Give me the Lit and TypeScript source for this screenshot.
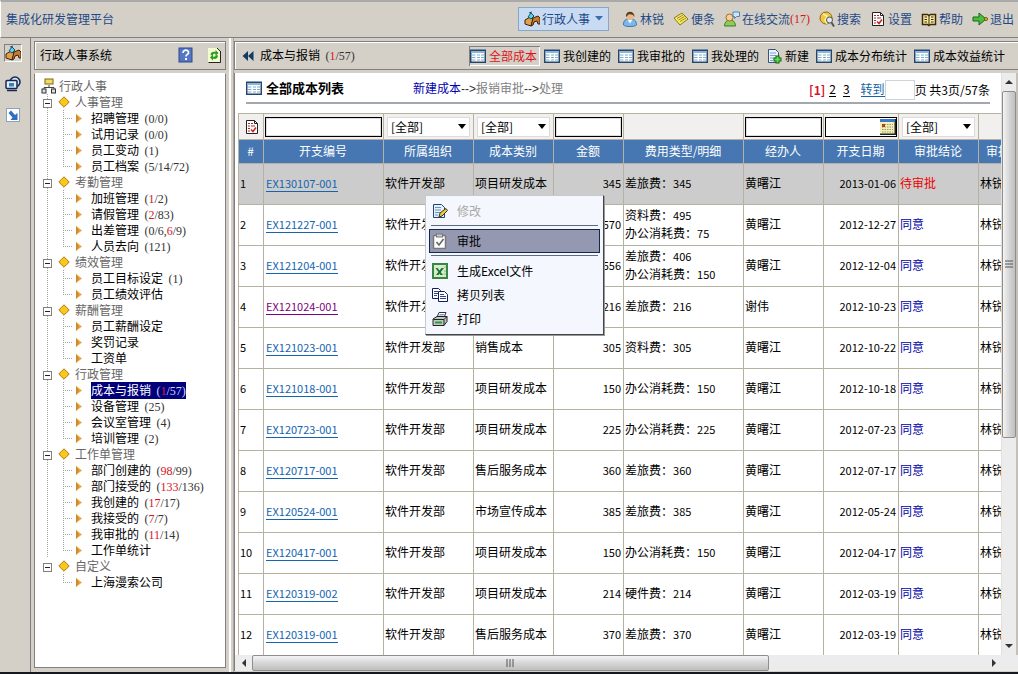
import { LitElement, html, css, svg, nothing, TemplateResult } from "lit";
import { customElement, state } from "lit/decorators.js";
import { classMap } from "lit/directives/class-map.js";
import { styleMap } from "lit/directives/style-map.js";

const shapes: Record<string, TemplateResult> = {
  desk: svg`<path d="M1 9l5-3 3 1v2l-2 6-6-2z" fill="#e0a050" stroke="#3a2408"/><path d="M9 7l5-2 2 2v6h-2l-1-3-3 1-1 3-2 1z" fill="#c87a30" stroke="#3a2408"/><path d="M4 6l3-4 3 3-3 3z" fill="#5fd0e8" stroke="#17506a"/><path d="M5 2l3-1" stroke="#17506a"/>`,
  monitors: svg`<circle cx="10" cy="6" r="5" fill="#cfe0f4" stroke="#16284e" stroke-width="1.5"/><rect x="1" y="4.500" width="11" height="8" rx="1" fill="#e9eef8" stroke="#16284e" stroke-width="1.500"/><rect x="4" y="7" width="5" height="3.500" fill="#2a86c8"/><path d="M2 14.500h10" stroke="#16284e" stroke-width="1.500"/>`,
  shortcut: svg`<rect x="1.500" y="1.500" width="13" height="13" fill="#fff" stroke="#8fa0b8"/><path d="M3.500 6L6 3.500l4 4.500 2.500-2v7h-7l2-2.500z" fill="#2f6fc0"/>`,
  person: svg`<path d="M1.500 14c0-6 3-6 6.500-6s6.500 1 6.500 6c-2 2-11 2-13 0z" fill="#7db8ea" stroke="#3c78b4"/><path d="M5.500 8.500l2.500 4 2.500-4z" fill="#fff"/><circle cx="8" cy="5" r="4" fill="#e9b98a"/><path d="M4 6c-1-7 9-7 8.500 0-1-2.500-4-3-6-2.500z" fill="#5a3c20"/>`,
  note: svg`<path d="M1 7l8-5 6 6-8 6z" fill="#f6e96a" stroke="#8c7a14"/><path d="M4 7.500l6-3.500M5.500 9l6-3.500M7 10.500l6-3.500" stroke="#a08c20"/>`,
  chat: svg`<path d="M.5 15c0-8 11-8 11 0z" fill="#8ccc58" stroke="#3c7c1c"/><circle cx="5.500" cy="6.500" r="3.500" fill="#f4cf9c" stroke="#a86c28"/><path d="M9 1h6.500v4.500h-3l-2 2v-2h-1.500z" fill="#cfe6fa" stroke="#4a86bc"/>`,
  search: svg`<circle cx="7" cy="7" r="6" fill="#f0c840" stroke="#906a10"/><path d="M4 3l4 2-2 4 2 4" stroke="#fff2a8" stroke-width="1.500" fill="none"/><circle cx="10.500" cy="9" r="3" fill="#dcebf8" stroke="#555"/><path d="M12.500 11.500l2.500 4" stroke="#555" stroke-width="2"/>`,
  report: svg`<path d="M2.500 1.500h8l3 3v10h-11z" fill="#fff" stroke="#222"/><path d="M10.500 1.500v3h3" fill="none" stroke="#222"/><path d="M4 4.500h2m1 0h2M4 7h2m1 0h4M4 9.500h2M4 12h2" stroke="#b02828"/><path d="M7 10.500l2 2 3-4" fill="none" stroke="#d02020" stroke-width="1.500"/>`,
  book: svg`<path d="M1.500 3.500h5l1.500 1 1.500-1h5v10h-5l-1.500 1-1.500-1h-5z" fill="#f6eaa0" stroke="#3a2a08" stroke-width="1.500"/><path d="M8 4v10M3.500 6h2.500M3.500 8.500h2.500M3.500 11h2.500M10 6h2.500M10 8.500h2.500M10 11h2.500" stroke="#3a2a08"/>`,
  exit: svg`<path d="M1 6h6V2l7 6-7 6V10H1z" fill="#46c03c" stroke="#1c6414"/><circle cx="14" cy="8" r="1.500" fill="#e8d020" stroke="#6a5a08"/>`,
  grid: svg`<rect x=".75" y="2.250" width="14.500" height="12" fill="#fff" stroke="#24466e" stroke-width="1.500"/><rect x="1.500" y="3" width="13" height="2" fill="#8cb4dc"/><path d="M2 7h3.500M7 7h3M11 7h3M2 9.500h3.500M7 9.500h3M11 9.500h3M2 12h3.500M7 12h3M11 12h3" stroke="#7fadc8"/>`,
  create: svg`<path d="M2.500 1.500h7l3 3v10h-10z" fill="#eef4fc" stroke="#35537e"/><path d="M4 5h6M4 7.500h6M4 10h4M4 12.500h3" stroke="#7fa4cc"/><path d="M11.500 7.500v8M7.500 11.500h8" stroke="#126010" stroke-width="4"/><path d="M11.500 8.500v6M8.500 11.500h6" stroke="#5fe04c" stroke-width="2"/>`,
  help: svg`<rect x="1" y="1" width="13" height="14" fill="#5476c4" stroke="#2c4890"/><path d="M5 6c0-4 6-3.500 5.500 0-.500 1.500-2.500 1.500-2.500 3.500" fill="none" stroke="#fff" stroke-width="1.700"/><rect x="7" y="11" width="2" height="2" fill="#fff"/>`,
  refresh: svg`<path d="M2 1h9l3 3v11h-12z" fill="#f4fbd0"/><path d="M14.500 4v11.500h-12M11 1l3 3" stroke="#222" fill="none"/><path d="M4.500 8c0-3 3-4 5-3V3l3 3-3 3V7c-1-.500-3 0-3 1.500zM12 8.500c0 3-3 4-5 3v2l-3-3 3-3v2c1 .500 3 0 3-1.500z" fill="#2c9c28"/>`,
  org: svg`<path d="M8 7v3M3 12V9.500h10V12" fill="none" stroke="#444"/><rect x="4" y="1" width="8" height="5" fill="#f4dc60" stroke="#7a6414"/><rect x="1" y="11" width="4" height="4" fill="#ddd" stroke="#333"/><rect x="10.500" y="11" width="4" height="4" fill="#ddd" stroke="#333"/>`,
  edit: svg`<path d="M1.500 1.500h8l3 3v10h-11z" fill="#e6f0fb" stroke="#24466e"/><path d="M3 4.500h6M3 7h6M3 9.500h5M3 12h3" stroke="#6a94c0"/><path d="M7 14l1-4 6-4.500 1.500 2-5.500 5.500z" fill="#f0cc30" stroke="#333"/>`,
  approve: svg`<rect x="1.500" y="2.500" width="12" height="13" rx="1" fill="#fff" stroke="#777" stroke-width="1.500"/><rect x="4.500" y="1" width="6" height="3" fill="#ccc" stroke="#777"/><path d="M4.500 9l2.500 3 4.500-6" fill="none" stroke="#666" stroke-width="1.600"/>`,
  excel: svg`<rect x="1" y="1" width="14" height="14" fill="#d4eccc" stroke="#3c8444" stroke-width="2"/><path d="M3.500 5h2l5.500 7h-2.500zM9.500 5h2.500l-5.500 7h-2.500z" fill="#1c7430"/><path d="M12 8h2M11.500 11h2.500M12 4h2" stroke="#7cc080"/>`,
  copy: svg`<path d="M.5 1.500h6l2 2v8h-8z" fill="#fff" stroke="#141c54"/><path d="M2 4.500h4M2 6.500h4M2 8.500h3" stroke="#2c4494"/><path d="M6.500 4.500h6l3 3v7h-9z" fill="#fff" stroke="#141c54"/><path d="M8 7.500h4M8 9.500h6M8 11.500h6" stroke="#2c4494"/>`,
  print: svg`<path d="M5 6l2-4.500h7l-2 5z" fill="#fff" stroke="#334"/><path d="M7.500 3.500h5M6.500 5h5" stroke="#78a0c8"/><path d="M1 8l4-2.500h10v5l-3 4h-11z" fill="#c0c8c8" stroke="#222"/><path d="M1.500 8.500h10.500l3-3M12 8.500v6" stroke="#222" fill="none"/><path d="M3 11.500h7" stroke="#2c9c30" stroke-width="2"/>`,
  calendar: svg`<rect x="0" y="0" width="16" height="16" fill="#222"/><rect x="0" y="0" width="14.500" height="14.500" fill="#f2efb8"/><rect x="0" y="0" width="15" height="3" fill="#3c78c8"/><path d="M2 5.500h11M2 8h11M2 10.500h11M2 13h11" stroke="#9a9a60" stroke-dasharray="1.500 1"/><rect x="2" y="5" width="3" height="3" fill="#b04020"/>`,
  rewind: svg`<path d="M8 3v10L2.500 8zM13.500 3v10L8 8z" fill="#123c64"/>`,
};
const icon = (name: string) =>
  html`<svg class="ic" viewBox="0 0 16 16" aria-hidden="true">${shapes[name]}</svg>`;

// The unread part of a count is wrapped in asterisks.
const count = (text: string) =>
  html`<span class="count">${text.split("*").map((part, i) => (i % 2 ? html`<b>${part}</b>` : part))}</span>`;

const tree: { name: string; items: [string, string?][] }[] = [
  { name: "人事管理", items: [["招聘管理", "(0/0)"], ["试用记录", "(0/0)"], ["员工变动", "(1)"], ["员工档案", "(5/14/72)"]] },
  { name: "考勤管理", items: [["加班管理", "(*1*/2)"], ["请假管理", "(*2*/83)"], ["出差管理", "(0/6,*6*/9)"], ["人员去向", "(121)"]] },
  { name: "绩效管理", items: [["员工目标设定", "(1)"], ["员工绩效评估"]] },
  { name: "薪酬管理", items: [["员工薪酬设定"], ["奖罚记录"], ["工资单"]] },
  { name: "行政管理", items: [["成本与报销", "(*1*/57)"], ["设备管理", "(25)"], ["会议室管理", "(4)"], ["培训管理", "(2)"]] },
  { name: "工作单管理", items: [["部门创建的", "(*98*/99)"], ["部门接受的", "(*133*/136)"], ["我创建的", "(*17*/17)"], ["我接受的", "(*7*/7)"], ["我审批的", "(*11*/14)"], ["工作单统计"]] },
  { name: "自定义", items: [["上海漫索公司"]] },
];

type Row = { id: string; kind: string; amount: number; fees: [string, number][]; by: string; date: string; result: string };
const row = (id: string, kind: string, amount: number, fees: [string, number][], date: string, by = "黄曙江", result = "同意"): Row =>
  ({ id, kind, amount, fees, by, date, result });
const rows: Row[] = [
  row("EX130107-001", "项目研发成本", 345, [["差旅费", 345]], "2013-01-06", "黄曙江", "待审批"),
  row("EX121227-001", "项目研发成本", 570, [["资料费", 495], ["办公消耗费", 75]], "2012-12-27"),
  row("EX121204-001", "项目研发成本", 556, [["差旅费", 406], ["办公消耗费", 150]], "2012-12-04"),
  row("EX121024-001", "项目研发成本", 216, [["差旅费", 216]], "2012-10-23", "谢伟"),
  row("EX121023-001", "销售成本", 305, [["资料费", 305]], "2012-10-22"),
  row("EX121018-001", "项目研发成本", 150, [["办公消耗费", 150]], "2012-10-18"),
  row("EX120723-001", "项目研发成本", 225, [["办公消耗费", 225]], "2012-07-23"),
  row("EX120717-001", "售后服务成本", 360, [["差旅费", 360]], "2012-07-17"),
  row("EX120524-001", "市场宣传成本", 385, [["差旅费", 385]], "2012-05-24"),
  row("EX120417-001", "项目研发成本", 150, [["办公消耗费", 150]], "2012-04-17"),
  row("EX120319-002", "项目研发成本", 214, [["硬件费", 214]], "2012-03-19"),
  row("EX120319-001", "售后服务成本", 370, [["差旅费", 370]], "2012-03-19"),
];

const tabs: [string, string][] = [
  ["grid", "全部成本"], ["grid", "我创建的"], ["grid", "我审批的"], ["grid", "我处理的"],
  ["create", "新建"], ["grid", "成本分布统计"], ["grid", "成本效益统计"],
];

@customElement("app-root")
export class AppRoot extends LitElement {
  @state() private closed = new Set<string>();
  @state() private tab = "全部成本";
  @state() private current = "成本与报销";
  @state() private menuOpen = true;

  static styles = css`
    :host {
      display: block;
      font: 12px/16px "Noto Sans CJK SC", sans-serif;
      color: #000;
    }
    * { box-sizing: border-box; }
    button, input, select { font: inherit; color: inherit; margin: 0; border-radius: 0; }
    button { background: none; border: 0; padding: 0; cursor: pointer; white-space: nowrap; }
    a { color: inherit; text-decoration: none; white-space: nowrap; }
    .ic { width: 16px; height: 16px; flex: none; display: block; }
    .count { font-family: "Liberation Serif", serif; color: #333; }
    .count b { font-weight: normal; color: #d8141c; }
    .num { font-size: 11px; }

    .app { height: 100vh; display: flex; flex-direction: column; background: #d4d0c8; overflow: hidden; border-bottom: 2px solid #16181f; }
    .top { flex: none; height: 38px; display: flex; align-items: center; padding: 0 4px 2px 5px; border-top: 2px solid #a9a9a9; border-bottom: 1px solid #808080; border-left: 1px solid #fff; color: #1f4a86; }
    .brand { flex: 1; font: inherit; margin: 0; }
    .links { display: flex; align-items: center; gap: 9px; }
    .links a, .module { display: flex; align-items: center; gap: 2px; }
    .module { height: 24px; padding: 0 5px; margin-right: 4px; background: #c8dbf3; border: 1px solid #86a6cc; }
    .caret { width: 8px; height: 5px; margin-left: 3px; }
    .links .count { color: #d8141c; margin-left: -2px; }

    .body { flex: 1; min-height: 0; display: flex; }
    .rail { flex: none; width: 31px; display: flex; flex-direction: column; align-items: center; gap: 13px; padding: 6px 4px 0 0; border-right: 1px solid #808080; }
    .rail button { width: 18px; height: 18px; display: grid; place-items: center; }
    .rail .on { border: 1px solid; border-color: #808080 #fff #fff #808080; }
    .side { flex: none; width: 192px; margin: 3px 0 4px 3px; display: flex; flex-direction: column; gap: 3px; }
    .bar { flex: none; height: 29px; display: flex; align-items: center; border: 1px solid #808080; box-shadow: inset 1px 1px #fff; }
    .side .bar { padding: 0 3px 2px 5px; gap: 12px; }
    .side .bar span { flex: 1; }
    .panel { flex: 1; min-height: 0; background: #fff; border: 1px solid #808080; border-top-color: #fff; padding: 4px 0 0 6px; overflow: hidden; }
    .split { flex: none; width: 8px; border-right: 1px solid #aaa69e; background: linear-gradient(90deg, transparent 3px, #fff 3px 5px, transparent 5px); }

    .root { display: flex; gap: 2px; height: 16px; color: #666; }
    .tree, .tree ul { list-style: none; margin: 0; padding: 0; }
    .line { display: flex; height: 16px; align-items: center; }
    .guide { flex: none; width: 16px; height: 16px; --v: repeating-linear-gradient(#a4a4a4 0 1px, transparent 1px 2px); --h: repeating-linear-gradient(90deg, #a4a4a4 0 1px, transparent 1px 2px); background-repeat: no-repeat; }
    .through { background-image: var(--v); background-position: 6px 0; background-size: 1px 16px; }
    .tee { background-image: var(--v), var(--h); background-position: 6px 0, 6px 8px; background-size: 1px 16px, 10px 1px; }
    .tee.end { background-size: 1px 9px, 10px 1px; }
    .toggle { display: block; padding: 3px 0 0 2px; }
    .toggle svg { display: block; width: 9px; height: 9px; }
    .diamond { width: 12px; height: 12px; margin: 0 5px 0 1px; }
    .arrow { width: 6px; height: 9px; margin: 0 9px 0 3px; }
    .group { color: #666; }
    .item { white-space: pre; }
    .item.on { background: #00007b; color: #fff; }
    .item.on .count { color: #cfd6ff; }
    .item.on .count b { color: #d02038; }

    .main { flex: 1; min-width: 0; display: flex; flex-direction: column; gap: 3px; padding: 3px 0 1px; }
    .main .bar { padding: 0 12px 0 5px; gap: 4px; border-right: 0; }
    .crumb { flex: 1; white-space: pre; }
    .tabs { display: flex; gap: 5px; }
    .tabs button { display: flex; align-items: center; gap: 3px; height: 20px; padding: 0 1px; }
    .tabs .on { color: #e01018; box-shadow: inset 1px 1px #808080, inset -1px -1px #fff; padding: 0 3px 0 1px; margin-right: -2px; }
    .pane { flex: 1; min-height: 0; display: grid; grid-template: minmax(0, 1fr) 16px / minmax(0, 1fr) 17px; border-left: 1px solid #808080; }
    .view { position: relative; overflow: hidden; background: #fff; padding: 0 0 0 3px; }
    .title { display: flex; align-items: center; height: 31px; margin: 0 11px 9px 8px; border-bottom: 2px solid #a3a8ae; }
    .title h2 { font-size: 13px; line-height: 16px; margin: 0 0 0 4px; width: 147px; }
    .steps { flex: 1; color: #808080; }
    .steps a { color: #0000b0; }
    .steps i { font: 12px "Liberation Sans", sans-serif; color: #333; }
    .pages { display: flex; align-items: center; gap: 7px; padding-top: 4px; white-space: nowrap; }
    .pages a { border-bottom: 1px solid; line-height: 14px; }
    .pages .cur { color: #d8142c; margin-right: -3px; font-weight: bold; }
    .jump { display: flex; align-items: center; margin-left: 4px; }
    .jump a { color: #1464a8; }
    .jump input { width: 30px; height: 20px; border: 1px solid #cfd4da; }

    table { border-collapse: collapse; table-layout: fixed; width: 790px; }
    th, td { border: 1px solid #b4b2a0; padding: 0 2px 2px 1px; text-align: left; font-weight: normal; white-space: nowrap; overflow: hidden; }
    .filters td { height: 26px; background: #f1f0ee; padding: 0 1px; }
    .filters .ic { margin-left: 4px; }
    .filters input { display: block; width: 100%; height: 20px; border: 1px solid #000; background: #fff; padding: 0 2px; outline: 1px solid #0002; outline-offset: -2px; }
    .date { display: flex; align-items: center; border: 1px solid #000; background: #fff; height: 20px; }
    .filters .date input { flex: 1; min-width: 0; border: 0; height: 18px; outline: 0; }
    .filters .date .ic { margin: 0; }
    .filters select { display: block; appearance: none; width: calc(100% - 4px); height: 20px; margin: 0 2px; padding: 0 3px; border: 1px solid #dcdcdc; background: #fff; line-height: 18px; }
    .pick { display: grid; align-items: center; }
    .pick > * { grid-area: 1 / 1; }
    .pick svg { justify-self: end; width: 8px; height: 5px; margin-right: 6px; pointer-events: none; }
    .heads th { height: 24px; background: #4677b3; color: #fff; text-align: center; }
    .heads th:last-child { padding-right: 0; }
    .row td { height: 41px; line-height: 18px; }
    .row.sel td { background: #cccccc; }
    .row .right { text-align: right; }
    .row .id a { color: #1464b0; border-bottom: 1px solid #1464b0; }
    .row .id .seen { color: #800080; border-color: #800080; }
    .row .id { padding-left: 2px; }
    .ok { color: #0000a8; }
    .wait { color: #f00000; }

    .sbv, .sbh { background: #ececec; display: flex; align-items: center; }
    .sbv { flex-direction: column; border-left: 1px solid #e0e0e0; border-right: 2px solid #c4c0b8; }
    .sbh { grid-column: 1 / -1; padding-right: 16px; }
    .sbv button, .sbh button { flex: none; width: 17px; height: 18px; display: grid; place-items: center; }
    .sbv button { width: 14px; }
    .sbv svg, .sbh svg { width: 8px; height: 8px; }
    .track { flex: 1; display: flex; align-self: stretch; }
    .sbv .track { flex-direction: column; }
    .thumb { display: grid; place-items: center; border: 1px solid #8e8e8e; border-radius: 2px; background: linear-gradient(#f4f4f4, #d6d6d6 50%, #bfbfbf); }
    .sbv .thumb { background: linear-gradient(90deg, #f4f4f4, #d6d6d6 50%, #bfbfbf); }

    .menu { position: absolute; left: 190px; top: 122px; width: 179px; padding: 3px; background: #f4f8fe; border: 1px solid; border-color: #c8c8d0 #444 #444 #c8c8d0; box-shadow: 1px 1px #999; }
    .menu button { width: 100%; height: 24px; padding: 0 2px; display: flex; align-items: center; gap: 9px; border: 1px solid transparent; }
    .menu button:disabled { color: #a8a8a8; cursor: default; }
    .menu button.on { background: #9498b0; border-color: #14284c; }
    .menu hr { height: 1px; margin: 2px 2px 3px; border: 0; background: #5d6c80; }
  `;

  private toggle(name: string) {
    const next = new Set(this.closed);
    next.has(name) ? next.delete(name) : next.add(name);
    this.closed = next;
  }

  private group(g: (typeof tree)[number], last: boolean) {
    const open = !this.closed.has(g.name);
    return html`<li>
      <div class="line group">
        <button class="guide toggle ${last ? "" : "through"}" aria-label=${g.name} aria-expanded=${open} @click=${() => this.toggle(g.name)}>
          <svg viewBox="0 0 9 9"><rect x=".5" y=".5" width="8" height="8" fill="#fff" stroke="#808080" /><path d=${open ? "M2 4.500h5" : "M2 4.500h5M4.500 2v5"} stroke="#222" /></svg>
        </button>
        <svg class="diamond" viewBox="0 0 12 12"><path d="M6 .8L11.200 6 6 11.200.8 6z" fill="#f8c81c" stroke="#b07c08" /></svg>
        <span>${g.name}</span>
      </div>
      ${open
        ? html`<ul>
            ${g.items.map(
              ([name, n], i) => html`<li class="line">
                <span class=${classMap({ guide: true, through: !last })}></span>
                <span class=${classMap({ guide: true, tee: true, end: i === g.items.length - 1 })}></span>
                <svg class="arrow" viewBox="0 0 6 9"><path d="M0 0l6 4.500L0 9z" fill="#eda63a" /><path d="M0 0l3 4.500L0 9z" fill="#c98a30" /></svg>
                <a href="#" class=${classMap({ item: true, on: name === this.current })} @click=${(e: Event) => { e.preventDefault(); this.current = name; }}>${name}${n ? html`  ${count(n)}` : nothing}</a>
              </li>`
            )}
          </ul>`
        : nothing}
    </li>`;
  }

  private picker(label: string) {
    return html`<div class="pick"><select aria-label=${label}><option>[全部]</option></select><svg viewBox="0 0 8 5"><path d="M0 0h8L4 5z" /></svg></div>`;
  }

  private arrow(d: string, label: string) {
    return html`<button aria-label=${label}><svg viewBox="0 0 8 8"><path d=${d} fill="#333" /></svg></button>`;
  }

  render() {
    return html`<div class="app">
      <header class="top">
        <h1 class="brand">集成化研发管理平台</h1>
        <nav class="links">
          <button class="module">${icon("desk")}行政人事<svg class="caret" viewBox="0 0 8 5"><path d="M0 0h8L4 4.500z" fill="#3a6ea8" /></svg></button>
          <a href="#">${icon("person")}林锐</a>
          <a href="#">${icon("note")}便条</a>
          <a href="#">${icon("chat")}在线交流<span class="count">(17)</span></a>
          <a href="#">${icon("search")}搜索</a>
          <a href="#">${icon("report")}设置</a>
          <a href="#">${icon("book")}帮助</a>
          <a href="#">${icon("exit")}退出</a>
        </nav>
      </header>
      <div class="body">
        <nav class="rail">
          <button class="on" aria-label="行政人事">${icon("desk")}</button>
          <button aria-label="窗口">${icon("monitors")}</button>
          <button aria-label="快捷方式">${icon("shortcut")}</button>
        </nav>
        <aside class="side">
          <div class="bar"><span>行政人事系统</span><button aria-label="帮助">${icon("help")}</button><button aria-label="刷新">${icon("refresh")}</button></div>
          <div class="panel">
            <div class="root">${icon("org")}行政人事</div>
            <ul class="tree">${tree.map((g, i) => this.group(g, i === tree.length - 1))}</ul>
          </div>
        </aside>
        <div class="split"></div>
        <main class="main">
          <div class="bar">
            <button aria-label="收起">${icon("rewind")}</button>
            <span class="crumb">成本与报销  ${count("(*1*/57)")}</span>
            <div class="tabs">
              ${tabs.map(([ic, name]) => html`<button class=${classMap({ on: name === this.tab })} @click=${() => (this.tab = name)}>${icon(ic)}${name}</button>`)}
            </div>
          </div>
          <div class="pane">
            <section class="view" @contextmenu=${(e: Event) => { e.preventDefault(); this.menuOpen = true; }}>
              <div class="title">
                ${icon("grid")}
                <h2>全部成本列表</h2>
                <div class="steps"><a href="#">新建成本</a><i>--&gt;</i>报销审批<i>--&gt;</i>处理</div>
                <div class="pages">
                  <span class="cur">[1]</span><a href="#">2</a><a href="#">3</a>
                  <span class="jump"><a href="#">转到</a><input aria-label="页码" />页 共3页/57条</span>
                </div>
              </div>
              ${this.table()}
              ${this.menuOpen ? this.menu() : nothing}
            </section>
            <div class="sbv">
              ${this.arrow("M0 6L4 2l4 4z", "向上")}
              <div class="track"><div class="thumb" style=${styleMap({ height: "63.5%" })}><svg viewBox="0 0 8 8"><path d="M0 1h8M0 4h8M0 7h8" stroke="#555" /></svg></div></div>
              ${this.arrow("M0 2h8L4 6z", "向下")}
            </div>
            <div class="sbh">
              ${this.arrow("M6 0v8L2 4z", "向左")}
              <div class="track"><div class="thumb" style=${styleMap({ width: "70.5%" })}><svg viewBox="0 0 8 8"><path d="M1 0v8M4 0v8M7 0v8" stroke="#555" /></svg></div></div>
              ${this.arrow("M2 0v8l4-4z", "向右")}
            </div>
          </div>
        </main>
      </div>
    </div>`;
  }

  private table() {
    const widths = [25, 120, 90, 80, 70, 120, 80, 75, 80, 50];
    const heads = ["#", "开支编号", "所属组织", "成本类别", "金额", "费用类型/明细", "经办人", "开支日期", "审批结论", "审批人"];
    return html`<table>
      <colgroup>${widths.map((w) => html`<col style=${styleMap({ width: `${w}px` })} />`)}</colgroup>
      <thead>
        <tr class="filters">
          <td>${icon("report")}</td>
          <td><input aria-label="开支编号" /></td>
          <td>${this.picker("所属组织")}</td>
          <td>${this.picker("成本类别")}</td>
          <td><input aria-label="金额" /></td>
          <td></td>
          <td><input aria-label="经办人" /></td>
          <td><div class="date"><input aria-label="开支日期" />${icon("calendar")}</div></td>
          <td>${this.picker("审批结论")}</td>
          <td></td>
        </tr>
        <tr class="heads">${heads.map((h) => html`<th scope="col">${h}</th>`)}</tr>
      </thead>
      <tbody>
        ${rows.map(
          (r, i) => html`<tr class=${classMap({ row: true, sel: i === 0 })}>
            <td class="num">${i + 1}</td>
            <td class="num id"><a href="#" class=${i === 3 ? "seen" : ""}>${r.id}</a></td>
            <td>软件开发部</td>
            <td>${r.kind}</td>
            <td class="num right">${r.amount}</td>
            <td>${r.fees.map(([name, n]) => html`<div>${name}：<span class="num">${n}</span></div>`)}</td>
            <td>${r.by}</td>
            <td class="num right">${r.date}</td>
            <td class=${r.result === "同意" ? "ok" : "wait"}>${r.result}</td>
            <td>林锐</td>
          </tr>`
        )}
      </tbody>
    </table>`;
  }

  private menu() {
    const close = () => (this.menuOpen = false);
    return html`<div class="menu" role="menu">
      <button role="menuitem" disabled>${icon("edit")}修改</button>
      <hr />
      <button role="menuitem" class="on" @click=${close}>${icon("approve")}审批</button>
      <hr />
      <button role="menuitem" @click=${close}>${icon("excel")}生成Excel文件</button>
      <button role="menuitem" @click=${close}>${icon("copy")}拷贝列表</button>
      <button role="menuitem" @click=${close}>${icon("print")}打印</button>
    </div>`;
  }
}
